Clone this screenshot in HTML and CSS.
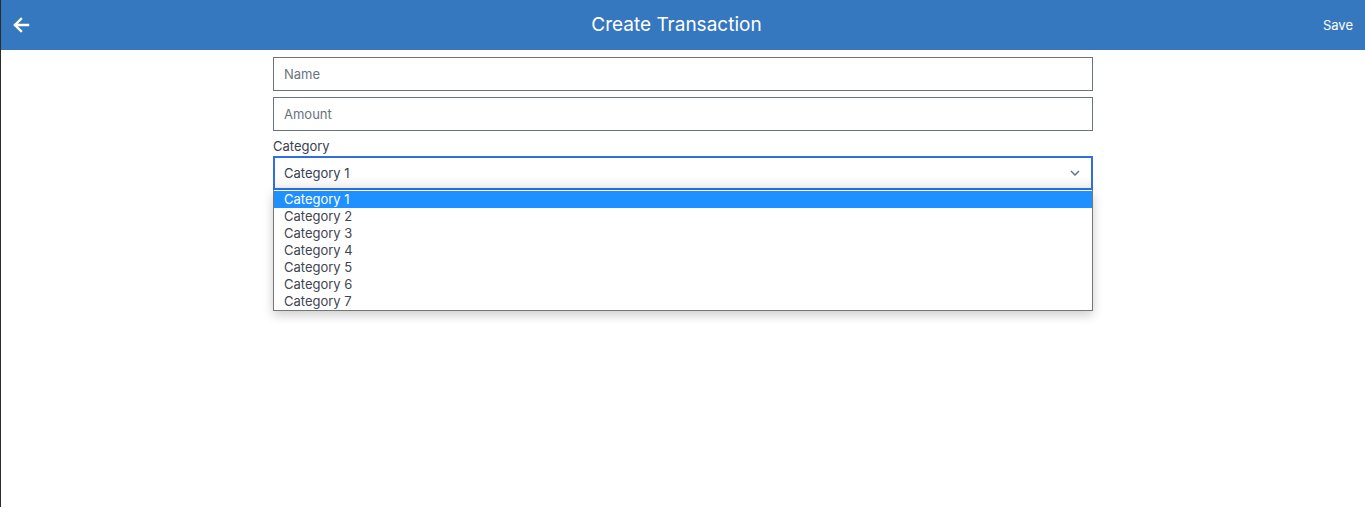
FILE: index.html
```html
<!DOCTYPE html>
<html lang="en">
<head>
<meta charset="utf-8">
<title>Create Transaction</title>
<link rel="stylesheet" href="styles.css">
</head>
<body>
<div class="page">
  <header class="topbar">
    <div class="left">
      <svg class="back" width="18" height="18" viewBox="0 0 18 18" aria-hidden="true">
        <path d="M16 9H3M9 3L3 9l6 6" fill="none" stroke="#fff" stroke-width="2.4" stroke-linecap="square"/>
      </svg>
    </div>
    <h1 class="title">Create Transaction</h1>
    <div class="right"><span class="save">Save</span></div>
  </header>
  <main class="form">
    <div class="field"><div class="input placeholder">Name</div></div>
    <div class="field"><div class="input placeholder">Amount</div></div>
    <label class="label">Category</label>
    <div class="select-wrap">
      <div class="select">
        <span>Category 1</span>
        <svg class="chev" width="10" height="6" viewBox="0 0 10 6" aria-hidden="true">
          <path d="M1 1l4 4 4-4" fill="none" stroke="#6b7280" stroke-width="1.5"/>
        </svg>
      </div>
      <ul class="list">
        <li class="opt active">Category 1</li>
        <li class="opt">Category 2</li>
        <li class="opt">Category 3</li>
        <li class="opt">Category 4</li>
        <li class="opt">Category 5</li>
        <li class="opt">Category 6</li>
        <li class="opt">Category 7</li>
      </ul>
    </div>
  </main>
</div>
</body>
</html>
```

FILE: styles.css
```css
* { box-sizing: border-box; }
html, body { margin: 0; padding: 0; height: 100%; }
body {
  font-family: Inter, "Liberation Sans", sans-serif;
  background: #fff;
  color: #374151;
}
.page {
  min-height: 507px;
  border-left: 1px solid #2b2b2b;
}
.topbar {
  height: 50px;
  background: #3678c0;
  display: flex;
  align-items: center;
  color: #fff;
}
.left {
  padding-left: 11px;
  width: 29px;
  display: flex;
  align-items: center;
}
.back { display: block; }
.title {
  flex: 1;
  margin: 0 0 2px;
  text-align: center;
  font-size: 19px;
  font-weight: 400;
  line-height: 1;
}
.right {
  padding-right: 12px;
  display: flex;
  align-items: center;
}
.save { font-size: 13px; }
.form {
  width: 820px;
  margin: 0 auto;
  padding-top: 7px;
  display: flex;
  flex-direction: column;
}
.field { margin-bottom: 6px; }
.input {
  height: 34px;
  border: 1px solid #6b7280;
  padding: 0 10px;
  display: flex;
  align-items: center;
  font-size: 13px;
}
.placeholder { color: #6b7280; }
.label {
  font-size: 13px;
  margin-top: 1px;
  line-height: 16px;
  margin-bottom: 2px;
  color: #374151;
}
.select-wrap { position: relative; }
.select {
  height: 34px;
  border: 2px solid #2f6fe0;
  padding: 0 9px;
  display: flex;
  align-items: center;
  justify-content: space-between;
  font-size: 13px;
  color: #374151;
  background: linear-gradient(#fff 60%, #f1f1f1);
}
.chev { margin-right: 2px; }
.list {
  list-style: none;
  margin: 0;
  padding: 1px 0 0;
  border: 1px solid #767676;
  border-top: none;
  background: #fff;
  box-shadow: 0 4px 10px rgba(0,0,0,0.2);
}
.opt {
  height: 17px;
  line-height: 17px;
  padding-left: 10px;
  font-size: 13px;
  color: #3f4550;
}
.opt.active { background: #1e90ff; color: #fff; }
```
